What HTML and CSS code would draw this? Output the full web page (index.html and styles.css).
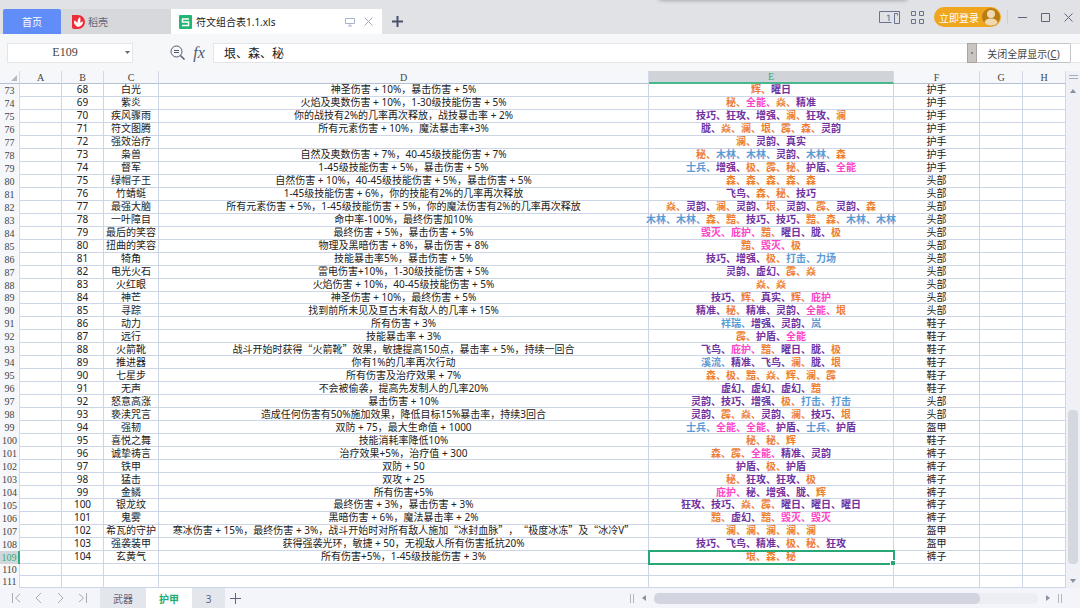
FILE: index.html
```
<!DOCTYPE html>
<html lang="zh-CN">
<head>
    <meta charset="UTF-8">
    <meta name="viewport" content="width=device-width, initial-scale=1.0">
    <title>符文组合表1.1.xls</title>
    <link rel="stylesheet" href="styles.css">
</head>
<body>
    <div class="app">
        <!-- Title bar -->
        <header class="titlebar">
            <div class="dock-hint"></div>
            <nav class="doc-tabs">
                <a href="#" class="doc-tab home">首页</a>
                <a href="#" class="doc-tab docer">
                    <svg width="13" height="14" viewBox="0 0 13 14"><path d="M0 0h6a7 7 0 0 1 0 14H2a2 2 0 0 1-2-2z" fill="#ee2b38"/><path d="M6 12C1.500 10 2 7 2 5.500 4 6 5 7 5.600 8.500 5.200 5.500 6 3.500 8 2c.8 2.500.6 4.500-.3 6.500C8.600 7.200 9.600 6.700 11 6.600 11 9.500 9.500 11.500 6 12z" fill="#fff"/></svg>
                    <span>稻壳</span>
                </a>
                <a href="#" class="doc-tab current">
                    <svg width="13" height="14" viewBox="0 0 13 14"><rect width="13" height="14" rx="1" fill="#22b573"/><path d="M10 4H3.500v3h6v3.500H3" fill="none" stroke="#fff" stroke-width="1.500"/></svg>
                    <span class="doc-name">符文组合表1.1.xls</span>
                    <svg width="10" height="10" viewBox="0 0 10 10" fill="none" stroke="#a9b1cb"><path d="M.5 1.500h9v5h-9zM5 6.500v2M3 9h4"/></svg>
                    <svg width="9" height="9" viewBox="0 0 9 9" fill="none" stroke="#a2a8b8"><path d="M.5.5l8 8M8.500.5l-8 8"/></svg>
                </a>
                <button class="icon-btn new-doc" aria-label="新建">
                    <svg width="11" height="11" viewBox="0 0 11 11" stroke="#48526b" stroke-width="2"><path d="M5.500 0v11M0 5.500h11"/></svg>
                </button>
            </nav>
            <div class="window-tools">
                <button class="icon-btn" aria-label="窗口列表">
                    <svg width="21" height="13" viewBox="0 0 21 13" fill="none" stroke="#68728c"><path d="M20.500 1V.5H.5v11h12M20.500.5v12h-5v-10h3v2M8 5l2-1v6"/></svg>
                </button>
                <button class="icon-btn" aria-label="应用">
                    <svg width="13" height="13" viewBox="0 0 13 13" fill="none" stroke="#68728c"><path d="M.5.5h4v4h-4zM8.500.5h4v4h-4zM.5 8.500h4v4h-4zM8.500 8.500h4v4h-4z"/></svg>
                </button>
                <button class="login">
                    <span>立即登录</span>
                    <svg width="18" height="18" viewBox="0 0 18 18"><circle cx="9" cy="9" r="9" fill="#b97c12"/><circle cx="9" cy="6" r="4" fill="#f0d9b0"/><path d="M2.500 15c.5-3.500 3-4.500 6.500-4.500s6 1 6.500 4.500a9 9 0 0 1-13 0z" fill="#f0d9b0"/></svg>
                </button>
                <span class="divider"></span>
                <button class="icon-btn" aria-label="最小化">
                    <svg width="9" height="9" viewBox="0 0 9 9" stroke="#5c667e"><path d="M0 4.500h9"/></svg>
                </button>
                <button class="icon-btn" aria-label="最大化">
                    <svg width="9" height="9" viewBox="0 0 9 9" fill="none" stroke="#5c667e"><path d="M.5.5h8v8h-8z"/></svg>
                </button>
                <button class="icon-btn" aria-label="关闭">
                    <svg width="9" height="9" viewBox="0 0 9 9" stroke="#5c667e"><path d="M.5.5l8 8M8.500.5l-8 8"/></svg>
                </button>
            </div>
        </header>

        <!-- Formula bar -->
        <div class="formula-bar">
            <div class="name-box">
                <input type="text" value="E109" aria-label="名称框">
                <button class="icon-btn" aria-label="展开名称">
                    <svg width="5" height="3" viewBox="0 0 5 3"><path d="M0 0h5L2.500 3z" fill="#666"/></svg>
                </button>
            </div>
            <button class="icon-btn search" aria-label="查找">
                <svg width="15" height="15" viewBox="0 0 15 15" fill="none" stroke="#4f5970"><circle cx="6.500" cy="6.500" r="5.500"/><path d="M4 5.500h5M4 7.500h5"/><path d="M10.500 10.500l4 4" stroke-width="1.500"/></svg>
            </button>
            <button class="icon-btn fx" aria-label="插入函数">fx</button>
            <input class="formula" type="text" value="垠、森、秘" aria-label="编辑栏">
            <div class="fullscreen">
                <span class="grip"></span>
                <button>关闭全屏显示(<u>C</u>)</button>
            </div>
        </div>

        <!-- Sheet -->
        <main class="workspace">
            <div class="grid-wrap">
                <table class="sheet">
                    <colgroup>
                        <col class="col-num"><col class="col-a"><col class="col-b"><col class="col-c">
                        <col class="col-d"><col class="col-e"><col class="col-f"><col class="col-g"><col class="col-h">
                    </colgroup>
                    <thead>
                        <tr>
                            <th class="corner"><svg width="6" height="6" viewBox="0 0 6 6"><path d="M6 0v6H0z" fill="#b4b9c2"/></svg></th>
                            <th>A</th><th>B</th><th>C</th><th>D</th><th class="active">E</th><th>F</th><th>G</th><th>H</th>
                        </tr>
                    </thead>
                    <tbody id="rows"></tbody>
                </table>
            </div>
            <div class="vscroll">
                <span class="split"></span>
                <svg width="6" height="4" viewBox="0 0 6 4"><path d="M0 4h6L3 0z" fill="#8b90a0"/></svg>
                <div class="vtrack"><div class="vthumb"></div></div>
                <svg width="6" height="4" viewBox="0 0 6 4"><path d="M0 0h6L3 4z" fill="#8b90a0"/></svg>
            </div>
        </main>

        <!-- Sheet tabs -->
        <footer class="bottom-bar">
            <div class="sheet-nav">
                <button class="icon-btn" aria-label="第一个"><svg width="9" height="10" viewBox="0 0 9 10" fill="none" stroke="#a6abb8"><path d="M.5 0v10M8 1L3.500 5 8 9"/></svg></button>
                <button class="icon-btn" aria-label="上一个"><svg width="9" height="10" viewBox="0 0 9 10" fill="none" stroke="#a6abb8"><path d="M7 0L2 5l5 5"/></svg></button>
                <button class="icon-btn" aria-label="下一个"><svg width="9" height="10" viewBox="0 0 9 10" fill="none" stroke="#a6abb8"><path d="M2 0l5 5-5 5"/></svg></button>
                <button class="icon-btn" aria-label="最后一个"><svg width="9" height="10" viewBox="0 0 9 10" fill="none" stroke="#a6abb8"><path d="M8.500 0v10M1 1l4.500 4L1 9"/></svg></button>
            </div>
            <nav class="sheet-tabs">
                <a href="#">武器</a>
                <a href="#" class="current">护甲</a>
                <a href="#" class="short">3</a>
            </nav>
            <button class="icon-btn add-sheet" aria-label="新建工作表">
                <svg width="11" height="11" viewBox="0 0 11 11" stroke="#5c667e"><path d="M5.500 0v11M0 5.500h11"/></svg>
            </button>
            <div class="hscroll">
                <span class="handle"></span>
                <svg width="4" height="6" viewBox="0 0 4 6"><path d="M4 0v6L0 3z" fill="#8b90a0"/></svg>
                <div class="htrack"><div class="hthumb"></div></div>
                <svg width="4" height="6" viewBox="0 0 4 6"><path d="M0 0v6l4-3z" fill="#8b90a0"/></svg>
                <span class="handle"></span>
            </div>
        </footer>
    </div>
    <script src="script.js"></script>
</body>
</html>
```

FILE: styles.css
```
* {
    box-sizing: border-box;
}

body {
    margin: 0;
    font-family: "Noto Sans", "Noto Sans CJK SC", sans-serif;
    font-size: 10px;
    color: #222;
    background: #f6f7f9;
}

a {
    color: inherit;
    text-decoration: none;
}

button, input {
    font: inherit;
    color: inherit;
}

svg {
    display: block;
    flex: none;
}

.app {
    display: flex;
    flex-direction: column;
    height: 100vh;
}

.icon-btn {
    display: flex;
    align-items: center;
    justify-content: center;
    padding: 0;
    border: none;
    background: none;
}

/* Title bar */
.titlebar {
    position: relative;
    display: flex;
    justify-content: space-between;
    height: 34px;
    background: #e0e2e6;
}
.dock-hint {
    position: absolute;
    top: -4px;
    left: 61%;
    width: 23%;
    height: 4px;
    box-shadow: 0 0 4px #8d9096;
}
.doc-tabs {
    display: flex;
    align-items: flex-end;
    padding-left: 3px;
}
.doc-tab {
    display: flex;
    align-items: center;
    height: 25px;
}
.doc-tab.home {
    justify-content: center;
    width: 58px;
    border-radius: 2px 2px 0 0;
    background: #608df8;
    color: #fff;
}
.doc-tab.docer {
    gap: 3px;
    width: 110px;
    padding-left: 11px;
    background: #d7d8dc;
    color: #5d6478;
}
.doc-tab.current {
    gap: 4px;
    width: 211px;
    padding: 0 9px 0 8px;
    background: #fff;
}
.doc-tab.current svg + svg {
    margin-left: 5px;
}
.doc-name {
    flex: 1;
}
.new-doc {
    width: 30px;
    height: 25px;
}
.window-tools {
    display: flex;
    align-items: center;
    gap: 10px;
    padding-right: 7px;
}
.window-tools .icon-btn + .icon-btn {
    margin-left: 1px;
}
.window-tools .divider + .icon-btn ~ .icon-btn {
    margin-left: 4px;
}
.login {
    display: flex;
    align-items: center;
    gap: 3px;
    height: 20px;
    padding: 0 1px 0 5px;
    border: none;
    border-radius: 10px;
    background: #f0a51e;
    color: #fff;
}
.divider {
    width: 1px;
    height: 14px;
    margin-left: -4px;
    background: #cdd0d6;
}

/* Formula bar */
.formula-bar {
    position: relative;
    display: flex;
    align-items: center;
    height: 37px;
    padding-left: 7px;
    background: #f6f7f9;
}
.name-box {
    display: flex;
    width: 126px;
    height: 20px;
    border: 1px solid #e3e5e9;
    background: #fff;
}
.name-box input {
    flex: 1;
    min-width: 0;
    padding: 0;
    border: none;
    background: none;
    font: 12px "Liberation Serif", serif;
    text-align: center;
    color: #444;
}
.name-box .icon-btn {
    width: 10px;
}
.search {
    width: 15px;
    margin-left: 37px;
}
.fx {
    width: 20px;
    margin: 0 4px;
    font: italic 16px "Liberation Serif", serif;
    color: #4f5970;
}
.formula {
    flex: 1;
    height: 20px;
    padding: 0 10px;
    border: 1px solid #e3e5e9;
    border-right: none;
    background: #fff;
    font-size: 12px;
}
.fullscreen {
    position: absolute;
    top: 9px;
    right: 9px;
    display: flex;
    height: 20px;
}
.grip {
    display: flex;
    align-items: center;
    justify-content: center;
    width: 10px;
    border: 1px solid #aaa5a2;
    background: #c9c4c1;
}
.grip::before {
    content: "";
    width: 2px;
    height: 2px;
    background: #8d8884;
}
.fullscreen button {
    width: 94px;
    padding: 0;
    border: 1px solid #c4c5c8;
    border-left: none;
    border-radius: 0 2px 2px 0;
    background: #fff;
    color: #444;
}

/* Sheet */
.workspace {
    display: flex;
    flex: 1;
    min-height: 0;
}
.grid-wrap {
    flex: 1;
    min-width: 0;
    overflow: hidden;
    background: #fff;
}
.sheet {
    width: 100%;
    height: 100%;
    table-layout: fixed;
    border-collapse: separate;
    border-spacing: 0;
    text-align: center;
    line-height: 11px;
    white-space: nowrap;
    text-spacing-trim: space-all;
}
.col-num { width: 20px; }
.col-a, .col-b { width: 42px; }
.col-c { width: 55px; }
.col-e { width: 245px; }
.col-f { width: 86px; }
.col-g, .col-h { width: 43px; }

.sheet th {
    padding: 0;
    border-right: 1px solid #d3d9e6;
    background: #f5f7fb;
    font: 10px/11px "Liberation Serif", serif;
    color: #444;
}
.sheet thead th {
    height: 12px;
    padding-top: 1px;
    line-height: 10px;
    border-bottom: 1px solid #b4c0d4;
}
.sheet thead th.active {
    border-bottom: 2px solid #49b78b;
    background: #d0d4d9;
    color: #2eae7d;
}
.corner svg {
    margin-left: 11px;
}
.sheet td {
    padding: 0;
    border-right: 1px solid #ccd6e6;
    border-bottom: 1px solid #ccd6e6;
}
.sheet tbody th.active {
    border-right: 2px solid #2eae7d;
    background: #d3d6da;
    color: #2eae7d;
}
.wide {
    font-family: "Noto Sans CJK SC", sans-serif;
    line-height: 1px;
}

/* Rune combinations can run slightly over the column */
.runes {
    margin: 0 -4px;
    font-weight: bold;
}
.orange { color: #ed7d31; }
.purple { color: #7030a0; }
.pink { color: #ff43c8; }
.blue { color: #5b9bd5; }

.selected {
    position: relative;
    outline: 2px solid #27a876;
    outline-offset: -1px;
}
.selected::after {
    content: "";
    position: absolute;
    right: -2px;
    bottom: -2px;
    width: 4px;
    height: 4px;
    border: 1px solid #fff;
    border-width: 1px 0 0 1px;
    background: #27a876;
}

/* Scroll bars */
.vscroll {
    display: flex;
    flex-direction: column;
    align-items: center;
    gap: 3px;
    width: 14px;
    padding: 4px 0 5px;
    background: #f0f1f6;
}
.split {
    width: 9px;
    height: 4px;
    margin-bottom: 7px;
    border: 1px solid #a9aebc;
    border-width: 1px 0;
}
.vtrack {
    display: flex;
    flex: 1;
    flex-direction: column;
    justify-content: flex-end;
    padding-bottom: 12px;
}
.vthumb {
    width: 10px;
    height: 33%;
    border-radius: 4px;
    background: #d6d8e0;
}

/* Bottom bar */
.bottom-bar {
    display: flex;
    align-items: center;
    height: 20px;
    background: #f4f5fa;
    color: #5d6478;
}
.sheet-nav {
    display: flex;
    gap: 13px;
    width: 100px;
    padding-left: 12px;
}
.sheet-tabs {
    display: flex;
    align-self: stretch;
}
.sheet-tabs a {
    display: flex;
    align-items: center;
    justify-content: center;
    width: 46px;
    padding-top: 1px;
    background: #e4e6ee;
}
.sheet-tabs a.current {
    background: #fff;
    font-weight: bold;
    color: #1fae72;
}
.sheet-tabs a.short {
    width: 33px;
}
.add-sheet {
    width: 20px;
}
.hscroll {
    display: flex;
    align-items: center;
    gap: 8px;
    width: 40%;
    margin-left: auto;
    margin-right: 18px;
}
.handle {
    width: 4px;
    height: 9px;
    border: 1px solid #b2b6c2;
    border-width: 0 1px;
}
.htrack {
    flex: 1;
    border-radius: 5px;
    background: #eceef4;
}
.hthumb {
    width: 85%;
    height: 11px;
    border-radius: 5px;
    background: #d2d5df;
}
```

FILE: script.js
```
const FIRST_ROW = 73;
const LAST_ROW = 111;
const ACTIVE_ROW = 109;

const runeColors = {
    orange: ['辉', '秘', '焱', '澜', '垠', '霹', '森', '极', '黯'],
    pink: ['全能', '毁灭', '庇护'],
    blue: ['木林', '士兵', '打击', '力场', '祥瑞', '岚', '溪流']
};

// name, effect, runes, slot
const armor = [
    ['白光', '神圣伤害 + 10%，暴击伤害 + 5%', '辉、曜日', '护手'],
    ['紫炎', '火焰及奥数伤害 + 10%，1-30级技能伤害 + 5%', '秘、全能、焱、精准', '护手'],
    ['疾风骤雨', '你的战技有2%的几率再次释放，战技暴击率 + 2%', '技巧、狂攻、增强、澜、狂攻、澜', '护手'],
    ['符文图腾', '所有元素伤害 + 10%，魔法暴击率+3%', '胧、焱、澜、垠、霹、森、灵韵', '护手'],
    ['强效治疗', '', '澜、灵韵、真实', '护手'],
    ['枭兽', '自然及奥数伤害 + 7%，40-45级技能伤害 + 7%', '秘、木林、木林、灵韵、木林、森', '护手'],
    ['督军', '1-45级技能伤害 + 5%，暴击伤害 + 5%', '士兵、增强、极、霹、秘、护盾、全能', '护手'],
    ['绿帽子王', '自然伤害 + 10%，40-45级技能伤害 + 5%，暴击伤害 + 5%', '森、森、森、森、森', '头部'],
    ['竹蜻蜓', '1-45级技能伤害 + 6%，你的技能有2%的几率再次释放', '飞鸟、森、秘、技巧', '头部'],
    ['最强大脑', '所有元素伤害 + 5%，1-45级技能伤害 + 5%，你的魔法伤害有2%的几率再次释放', '焱、灵韵、澜、灵韵、垠、灵韵、霹、灵韵、森', '头部'],
    ['一叶障目', '命中率-100%，最终伤害加10%', '木林、木林、森、黯、技巧、技巧、黯、森、木林、木林', '头部'],
    ['最后的笑容', '最终伤害 + 5%，暴击伤害 + 5%', '毁灭、庇护、黯、曜日、胧、极', '头部'],
    ['扭曲的笑容', '物理及黑暗伤害 + 8%，暴击伤害 + 8%', '黯、毁灭、极', '头部'],
    ['犄角', '技能暴击率5%，暴击伤害 + 5%', '技巧、增强、极、打击、力场', '头部'],
    ['电光火石', '雷电伤害+10%，1-30级技能伤害 + 5%', '灵韵、虚幻、霹、焱', '头部'],
    ['火红眼', '火焰伤害 + 10%，40-45级技能伤害 + 5%', '焱、焱', '头部'],
    ['神芒', '神圣伤害 + 10%，最终伤害 + 5%', '技巧、辉、真实、辉、庇护', '头部'],
    ['寻踪', '找到前所未见及亘古未有敌人的几率 + 15%', '精准、秘、精准、灵韵、全能、垠', '头部'],
    ['动力', '所有伤害 + 3%', '祥瑞、增强、灵韵、岚', '鞋子'],
    ['远行', '技能暴击率 + 3%', '霹、护盾、全能', '鞋子'],
    ['火箭靴', '战斗开始时获得“火箭靴”效果，敏捷提高150点，暴击率 + 5%，持续一回合', '飞鸟、庇护、黯、曜日、胧、极', '鞋子'],
    ['推进器', '你有1%的几率再次行动', '溪流、精准、飞鸟、澜、胧、垠', '鞋子'],
    ['七星步', '所有伤害及治疗效果 + 7%', '森、极、黯、焱、辉、澜、霹', '鞋子'],
    ['无声', '不会被偷袭，提高先发制人的几率20%', '虚幻、虚幻、虚幻、黯', '鞋子'],
    ['怒意高涨', '暴击伤害 + 10%', '灵韵、技巧、增强、极、打击、打击', '头部'],
    ['亵渎咒言', '造成任何伤害有50%施加效果，降低目标15%暴击率，持续3回合', '灵韵、霹、焱、灵韵、澜、技巧、垠', '头部'],
    ['强韧', '双防 + 75，最大生命值 + 1000', '士兵、全能、全能、护盾、士兵、护盾', '盔甲'],
    ['喜悦之舞', '技能消耗率降低10%', '秘、秘、辉', '鞋子'],
    ['诚挚祷言', '治疗效果+5%，治疗值 + 300', '森、霹、全能、精准、灵韵', '裤子'],
    ['铁甲', '双防 + 50', '护盾、极、护盾', '裤子'],
    ['猛击', '双攻 + 25', '秘、狂攻、狂攻、极', '裤子'],
    ['金鳞', '所有伤害+5%', '庇护、秘:purple、增强、胧、辉', '裤子'],
    ['银龙纹', '最终伤害 + 3%，暴击伤害 + 3%', '狂攻、技巧、焱、霹、曜日、曜日、曜日', '裤子'],
    ['鬼雾', '黑暗伤害 + 6%，魔法暴击率 + 2%', '黯、虚幻、黯、毁灭、毁灭', '裤子'],
    ['希瓦的守护', '寒冰伤害 + 15%，最终伤害 + 3%，战斗开始时对所有敌人施加“冰封血脉”，“极度冰冻”及“冰冷V”', '澜、澜、澜、澜、澜', '盔甲'],
    ['强袭装甲', '获得强袭光环，敏捷 + 50，无视敌人所有伤害抵抗20%', '技巧、飞鸟、精准、极、秘、狂攻', '盔甲'],
    ['玄黄气', '所有伤害+5%，1-45级技能伤害 + 3%', '垠、森、秘', '裤子']
];

function runeColor(name) {
    const found = Object.keys(runeColors).find(color => runeColors[color].includes(name));
    return found || 'purple';
}

function renderRunes(text) {
    const runes = text.split('、');
    return runes.map((rune, i) => {
        const [name, color] = rune.split(':');
        const mark = i < runes.length - 1 ? '、' : '';
        return `<span class="${color || runeColor(name)}">${name}${mark}</span>`;
    }).join('');
}

function renderRow(row) {
    const item = armor[row - FIRST_ROW];
    const active = row === ACTIVE_ROW;
    const head = `<th${active ? ' class="active"' : ''}>${row}</th>`;
    if (!item) {
        return `<tr>${head}${'<td></td>'.repeat(8)}</tr>`;
    }
    const [name, effect, runes, slot] = item;
    return `
        <tr>
            ${head}
            <td></td>
            <td>${row - 5}</td>
            <td>${name}</td>
            <td>${effect.replace(/[“”]/g, '<span class="wide">$&</span>')}</td>
            <td${active ? ' class="selected"' : ''}><div class="runes">${renderRunes(runes)}</div></td>
            <td>${slot}</td>
            <td></td>
            <td></td>
        </tr>`;
}

let html = '';
for (let row = FIRST_ROW; row <= LAST_ROW; row++) {
    html += renderRow(row);
}
document.getElementById('rows').innerHTML = html;
```
